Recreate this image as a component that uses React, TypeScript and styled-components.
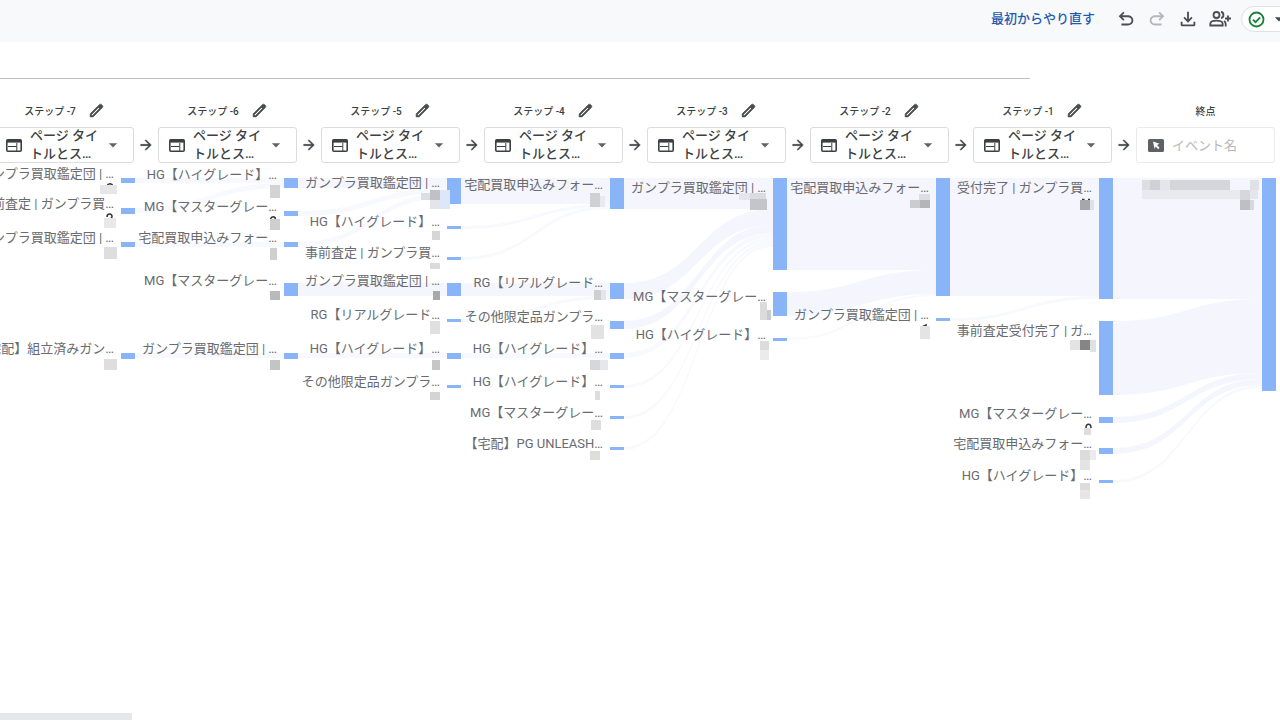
import React from 'react';
import styled, { createGlobalStyle, css } from 'styled-components';
import { MdArrowDropDown } from 'react-icons/md';

const GlobalStyle = createGlobalStyle`
  *, *::before, *::after { box-sizing: border-box; }
  body {
    margin: 0;
    background: #fff;
    color: #3c4043;
    font-family: Roboto, 'Noto Sans CJK JP', sans-serif;
  }
  button, input, select { font: inherit; }
`;

const Page = styled.div`
  display: flex;
  flex-direction: column;
  min-height: 100vh;
  overflow: hidden;
`;

const Toolbar = styled.header`
  display: flex;
  align-items: center;
  justify-content: flex-end;
  gap: 9px;
  height: 42px;
  padding-bottom: 4px;
  background: #f8f9fa;
`;

const RestartButton = styled.button`
  margin-right: 11px;
  padding: 0;
  border: 0;
  background: none;
  color: #1f5cad;
  font-size: 13px;
  font-weight: 500;
  line-height: 20px;
  white-space: nowrap;
`;

const IconButton = styled.button<{ $muted?: boolean }>`
  display: flex;
  padding: 0;
  border: 0;
  background: none;
  color: ${(p) => (p.$muted ? '#b4b7ba' : '#4a4d51')};
`;

const StatusButton = styled.button`
  display: flex;
  flex: none;
  align-items: center;
  gap: 4px;
  width: 62px;
  height: 26px;
  margin-right: -23px;
  padding: 0 6px;
  border: 1px solid #dfe1e5;
  border-radius: 13px;
  background: #fff;
  color: #4a4d51;
`;

const TitleInput = styled.input`
  width: auto;
  height: 37px;
  margin-right: 250px;
  padding: 0;
  border: 0;
  border-bottom: 1px solid #bdbfc2;
  background: none;
  outline: none;
`;

const Scroller = styled.main`
  display: flex;
  flex: 1;
  justify-content: flex-end;
  padding: 21px 5px 0 0;
  overflow: hidden;
`;

const Strip = styled.div`
  display: flex;
  flex: none;
  flex-direction: column;
`;

const Steps = styled.div`
  display: flex;
  align-items: flex-end;
`;

const Step = styled.section`
  display: flex;
  flex-direction: column;
  gap: 7px;
  width: 139px;
`;

const StepHeader = styled.div`
  display: flex;
  align-items: center;
  justify-content: center;
  gap: 12px;
  height: 20px;
  font-size: 10px;
  font-weight: 500;
`;

const fieldBox = css`
  display: flex;
  align-items: center;
  height: 36px;
  border: 1px solid #dadce0;
  border-radius: 3px;
  background: #fff;
`;

const SelectField = styled.label`
  ${fieldBox}
  position: relative;
  padding: 0 10px;
`;

const EventField = styled.label`
  ${fieldBox}
  gap: 8px;
  padding: 0 11px;
  border-color: #e8eaed;
`;

const SelectText = styled.span`
  flex: 1;
  padding-left: 8px;
  font-size: 13px;
  font-weight: 500;
  line-height: 18px;
`;

const HiddenSelect = styled.select`
  position: absolute;
  inset: 0;
  width: 100%;
  opacity: 0;
`;

const EventInput = styled.input`
  flex: 1;
  min-width: 0;
  padding: 0;
  border: 0;
  background: none;
  font-size: 13px;
  &::placeholder { color: #b5b8bb; opacity: 1; }
`;

const StepArrow = styled.span`
  display: flex;
  align-items: center;
  justify-content: center;
  width: 24px;
  height: 36px;
`;

const Chart = styled.svg`
  display: block;
  margin-top: 7px;
`;

const NodeLabel = styled.text`
  font-size: 13px;
  fill: #686b70;
  text-anchor: end;
`;

const ScrollThumb = styled.div`
  width: 132px;
  height: 7px;
  background: #e6e7e8;
`;

const SymbolIcon = ({ d, size, weight = 0 }: { d: string; size: number; weight?: number }) => (
  <svg
    width={size}
    height={size}
    viewBox="0 -960 960 960"
    fill="currentColor"
    stroke="currentColor"
    strokeWidth={weight}
    overflow="visible"
    aria-hidden="true"
  >
    <path d={d} />
  </svg>
);

const UNDO =
  'M280-200v-80h284q63 0 109.5-40T720-420q0-60-46.5-100T564-560H312l104 104-56 56-200-200 200-200 56 56-104 104h252q97 0 166.5 63T800-420q0 94-69.5 157T564-200H280Z';
const REDO =
  'M396-200q-97 0-166.5-63T160-420q0-94 69.5-157T396-640h252L544-744l56-56 200 200-200 200-56-56 104-104H396q-63 0-109.5 40T240-420q0 60 46.5 100T396-280h284v80H396Z';
const DOWNLOAD =
  'M480-320 280-520l56-58 104 104v-326h80v326l104-104 56 58-200 200ZM240-160q-33 0-56.5-23.5T160-240v-120h80v120h480v-120h80v120q0 33-23.5 56.5T720-160H240Z';
const ARROW_FORWARD =
  'M647-440H160v-80h487L423-744l57-56 320 320-320 320-57-56 224-224Z';
const EDIT =
  'M200-200h57l391-391-57-57-391 391v57Zm-80 80v-170l528-527q12-11 26.5-17t30.5-6q16 0 31 6t26 18l55 56q12 11 17.5 26t5.500 30q0 16-5.500 30.500T817-647L290-120H120Zm640-584-56-56 56 56Zm-141 85-28-29 57 57-29-28Z';

const GroupAddIcon = () => (
  <svg width="24" height="22" viewBox="0 0 24 22" fill="none" stroke="currentColor" strokeWidth="1.800" aria-hidden="true">
    <circle cx="8.500" cy="7" r="3" />
    <path d="M2.300 17.500v-1.800c0-2 3.200-3 6.200-3s6.200 1 6.200 3v1.800z" />
    <path d="M13 4c3.200.200 3.200 5.800 0 6M16 13c1.300.700 1.700 1.700 1.700 3v2.400M20 7.500v6M17 10.500h6" />
  </svg>
);

const CheckIcon = () => (
  <svg width="17" height="17" viewBox="0 0 17 17" fill="none" stroke="#188038" strokeWidth="1.800" aria-hidden="true">
    <circle cx="8.500" cy="8.500" r="7" />
    <path d="M5 8.700l2.500 2.500L12.200 6.300" />
  </svg>
);

const PageIcon = () => (
  <svg width="16" height="13" viewBox="0 0 16 13" fill="none" stroke="#3c4043" aria-hidden="true">
    <rect x=".800" y=".800" width="14.400" height="11.400" rx="1" strokeWidth="1.600" />
    <path d="M1 2.200h14" strokeWidth="2.800" />
    <path d="M2 7.500h8.500M10.800 4v8" strokeWidth="1" />
  </svg>
);

const CursorIcon = () => (
  <svg width="16" height="13" viewBox="0 0 16 13" aria-hidden="true">
    <rect width="16" height="13" rx="1.500" fill="#5f6165" />
    <path d="M5 2.500l6.500 2.300-2.500 1.300 2.600 2.700-1.400 1.400-2.600-2.700-1 2.500z" fill="#fff" />
  </svg>
);

const stepNumbers = [-7, -6, -5, -4, -3, -2, -1];

const PITCH = 163;
const BAR_WIDTH = 14;
const barX = (column: number) => 121 + column * PITCH;

/* [y, height] of every node bar, one list per column */
const bars: [number, number][][] = [
  [[178, 5], [208, 6], [242, 5], [353, 6]],
  [[178, 10], [211, 5], [242, 5], [283, 13], [353, 6]],
  [[178, 26], [226, 3], [257, 3], [283, 13], [319, 3], [353, 6], [385, 3]],
  [[178, 31], [283, 16], [321, 8], [353, 6], [385, 3], [416, 3], [447, 3]],
  [[178, 92], [292, 24], [338, 3]],
  [[178, 118], [318, 3]],
  [[178, 121], [321, 74], [417, 6], [448, 6], [480, 3]],
  [[178, 213]],
];

/* [from column, source y, thickness, target y] */
const links: [number, number, number, number][] = [
  [0, 178, 5, 178], [0, 208, 5, 183], [0, 242, 5, 242], [0, 353, 5, 353],
  [1, 178, 10, 178], [1, 211, 5, 188], [1, 242, 5, 193], [1, 283, 13, 283], [1, 353, 5, 353],
  [2, 178, 26, 178], [2, 226, 3, 204], [2, 257, 3, 206], [2, 283, 13, 283], [2, 319, 3, 296], [2, 353, 5, 353],
  [3, 178, 31, 178], [3, 283, 16, 209], [3, 321, 8, 225], [3, 353, 5, 233], [3, 385, 3, 238], [3, 416, 3, 241], [3, 447, 3, 244],
  [4, 178, 92, 178], [4, 292, 24, 270], [4, 338, 2, 294],
  [5, 178, 118, 178], [5, 318, 3, 296],
  [6, 178, 121, 178], [6, 321, 74, 299], [6, 417, 6, 373], [6, 448, 6, 379], [6, 480, 3, 385],
];

const labels: [number, string][][] = [
  [[178, 'ガンプラ買取鑑定団 | …'], [208, '事前査定 | ガンプラ買…'], [242, 'ガンプラ買取鑑定団 | …'], [353, '【宅配】組立済みガン…']],
  [[179, 'HG【ハイグレード】…'], [211, 'MG【マスターグレー…'], [242, '宅配買取申込みフォー…'], [285, 'MG【マスターグレー…'], [353, 'ガンプラ買取鑑定団 | …']],
  [[187, 'ガンプラ買取鑑定団 | …'], [226, 'HG【ハイグレード】…'], [257, '事前査定 | ガンプラ買…'], [285, 'ガンプラ買取鑑定団 | …'], [319, 'RG【リアルグレード…'], [353, 'HG【ハイグレード】…'], [386, 'その他限定品ガンプラ…']],
  [[189, '宅配買取申込みフォー…'], [287, 'RG【リアルグレード…'], [321, 'その他限定品ガンプラ…'], [353, 'HG【ハイグレード】…'], [386, 'HG【ハイグレード】…'], [417, 'MG【マスターグレー…'], [448, '【宅配】PG UNLEASH…']],
  [[192, 'ガンプラ買取鑑定団 | …'], [301, 'MG【マスターグレー…'], [339, 'HG【ハイグレード】…']],
  [[192, '宅配買取申込みフォー…'], [319, 'ガンプラ買取鑑定団 | …']],
  [[192, '受付完了 | ガンプラ買…'], [335, '事前査定受付完了 | ガ…'], [418, 'MG【マスターグレー…'], [448, '宅配買取申込みフォー…'], [480, 'HG【ハイグレード】…']],
];

/* pixelated counts: x, y, width, height, fill */
const mosaic: [number, number, number, number, string][] = [
  [100, 185, 17, 9, '#e6e6e6'], [104, 218, 12, 10, '#e8e8e8'], [104, 247, 13, 12, '#dedede'], [104, 359, 13, 11, '#dedede'],
  [270, 185, 10, 13, '#d3d3d3'], [270, 219, 10, 11, '#cfcfcf'], [270, 248, 7, 12, '#cfcfcf'], [270, 291, 10, 9, '#b9bbbb'], [270, 360, 10, 10, '#c3c5c5'],
  [421, 193, 9, 7, '#dcdee3'], [430, 190, 10, 10, '#bfc1c6'], [440, 190, 10, 19, '#dce7f9'], [430, 200, 10, 9, '#e3e5ea'],
  [432, 231, 8, 9, '#d6d6d6'], [430, 263, 10, 6, '#dadada'], [433, 291, 7, 9, '#a9a9a9'], [430, 321, 10, 13, '#e0e0e0'], [432, 360, 8, 10, '#c6c6c6'], [430, 392, 10, 8, '#d4d4d4'],
  [590, 193, 10, 14, '#cfd0d4'], [600, 196, 5, 11, '#e8eaf1'], [594, 290, 7, 10, '#cdcfd1'], [601, 290, 5, 10, '#e2e5ec'], [591, 325, 13, 14, '#e1e2e1'],
  [590, 360, 10, 10, '#d6d7d8'], [600, 360, 8, 10, '#e5e7ec'], [595, 391, 5, 9, '#dedede'], [591, 420, 10, 10, '#dedede'], [590, 451, 10, 9, '#dfddda'],
  [739, 193, 11, 7, '#e4e6ec'], [750, 193, 16, 6, '#d9dbe0'], [750, 199, 17, 11, '#c3c5c9'],
  [760, 302, 7, 18, '#dbdbdc'], [767, 310, 4, 10, '#c8cad0'], [760, 341, 9, 9, '#dcdcdc'], [760, 350, 9, 10, '#ebebeb'],
  [919, 194, 11, 6, '#dcdee3'], [910, 200, 10, 8, '#cacccf'], [920, 200, 10, 8, '#b3b5b8'], [920, 326, 10, 13, '#e4e4e3'],
  [1080, 200, 10, 10, '#a5a7aa'], [1090, 200, 4, 10, '#dfe1e6'],
  [1070, 340, 10, 10, '#e3e3e3'], [1080, 340, 10, 10, '#858585'], [1090, 340, 6, 12, '#dfe1e3'],
  [1084, 428, 7, 7, '#dedede'], [1080, 450, 10, 10, '#dcdcdc'], [1080, 460, 10, 10, '#e4e4e4'], [1090, 450, 6, 10, '#ebebec'],
  [1080, 483, 10, 7, '#dcdcdc'], [1080, 490, 10, 9, '#e6e6e6'],
  [1142, 180, 8, 10, '#dcdee2'], [1150, 180, 10, 10, '#cfd1d5'], [1160, 180, 10, 10, '#e4e6eb'], [1170, 180, 60, 10, '#d4d6da'], [1250, 180, 9, 10, '#dfe1e7'],
  [1142, 190, 98, 9, '#e8eaf0'], [1240, 190, 10, 10, '#d5d7dc'], [1250, 190, 8, 9, '#e4e6ec'], [1240, 200, 10, 10, '#bdc0c3'], [1250, 200, 4, 10, '#d5d9dd'],
];

/* count digits whose tops stick out above their mosaic tile */
const digitTops = [
  'M107 186c1-3 5-3 6 0',
  'M107 217c0-4 5.500-4 5 0l-2 3',
  'M270.500 219c1-3 4.500-3 5 0',
  'M922 327l4-2v3',
  'M1082 199.500h2.500M1088 199.500h2',
  'M1086 428c0-5 5-5 5 0',
];

const linkPath = ([column, y, h, target]: [number, number, number, number]) => {
  const x0 = barX(column) + BAR_WIDTH;
  const x1 = barX(column + 1);
  const mid = (x0 + x1) / 2;
  return `M${x0} ${y}C${mid} ${y} ${mid} ${target} ${x1} ${target}v${h}C${mid} ${target + h} ${mid} ${y + h} ${x0} ${y + h}z`;
};

export default function App() {
  return (
    <Page>
      <GlobalStyle />
      <Toolbar>
        <RestartButton type="button">最初からやり直す</RestartButton>
        <IconButton type="button" aria-label="元に戻す"><SymbolIcon d={UNDO} size={22} /></IconButton>
        <IconButton type="button" aria-label="やり直す" $muted><SymbolIcon d={REDO} size={22} /></IconButton>
        <IconButton type="button" aria-label="ダウンロード"><SymbolIcon d={DOWNLOAD} size={22} /></IconButton>
        <IconButton type="button" aria-label="共有"><GroupAddIcon /></IconButton>
        <StatusButton type="button" aria-label="ステータス">
          <CheckIcon />
          <MdArrowDropDown size={20} />
        </StatusButton>
      </Toolbar>
      <TitleInput aria-label="タイトル" />
      <Scroller>
        <Strip>
          <Steps>
            {stepNumbers.map((n) => (
              <React.Fragment key={n}>
                <Step>
                  <StepHeader>
                    <span>ステップ {n}</span>
                    <IconButton type="button" aria-label={`ステップ ${n} を編集`}>
                      <SymbolIcon d={EDIT} size={17} weight={36} />
                    </IconButton>
                  </StepHeader>
                  <SelectField>
                    <PageIcon />
                    <SelectText>ページ タイ<br />トルとス…</SelectText>
                    <MdArrowDropDown size={20} color="#5f6368" />
                    <HiddenSelect aria-label={`ステップ ${n} のディメンション`}>
                      <option>ページ タイトルとスクリーン名</option>
                    </HiddenSelect>
                  </SelectField>
                </Step>
                <StepArrow><SymbolIcon d={ARROW_FORWARD} size={16} weight={24} /></StepArrow>
              </React.Fragment>
            ))}
            <Step>
              <StepHeader><span>終点</span></StepHeader>
              <EventField>
                <CursorIcon />
                <EventInput placeholder="イベント名" aria-label="イベント名" />
              </EventField>
            </Step>
          </Steps>
          <Chart width="1280" height="340" viewBox="-5 170 1280 340" overflow="visible" role="img" aria-label="経路データ">
            <g fill="#f5f6fd">
              {links.map((link, i) => <path key={i} d={linkPath(link)} opacity={link[2] < 6 ? 0.7 : 1} />)}
            </g>
            <g fill="#8ab4f8">
              {bars.map((column, c) =>
                column.map(([y, h]) => <rect key={`${c}-${y}`} x={barX(c)} y={y} width={BAR_WIDTH} height={h} />),
              )}
            </g>
            {labels.map((column, c) =>
              column.map(([y, text]) => <NodeLabel key={`${c}-${y}`} x={barX(c) - 7} y={y}>{text}</NodeLabel>),
            )}
            <g fill="none" stroke="#333" strokeWidth="1.500">
              {digitTops.map((d) => <path key={d} d={d} />)}
            </g>
            <g>
              {mosaic.map(([x, y, w, h, fill], i) => <rect key={i} x={x} y={y} width={w} height={h} fill={fill} />)}
            </g>
          </Chart>
        </Strip>
      </Scroller>
      <ScrollThumb />
    </Page>
  );
}
